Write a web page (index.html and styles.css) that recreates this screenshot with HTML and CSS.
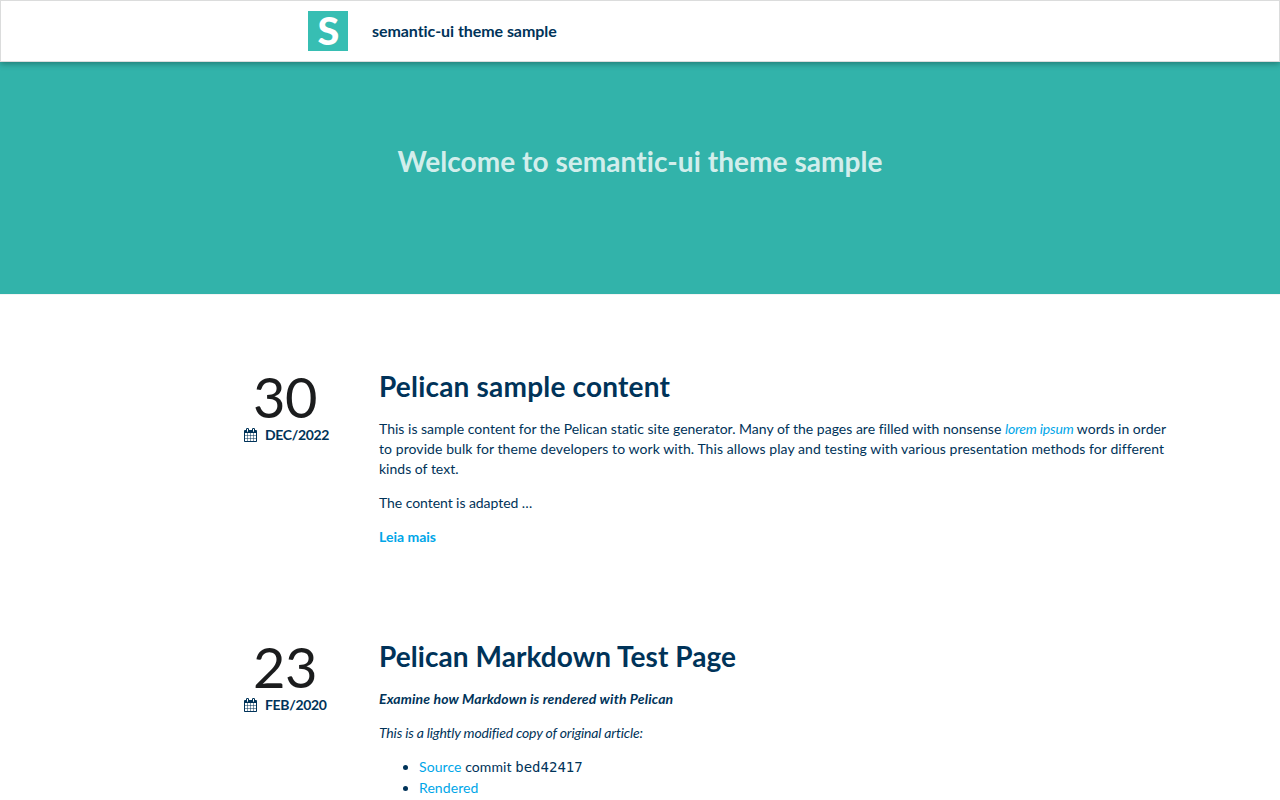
FILE: index.html
```html
<!DOCTYPE html>
<html lang="pt">
<head>
<meta charset="utf-8">
<title>semantic-ui theme sample</title>
<link rel="stylesheet" href="styles.css">
</head>
<body>
<svg class="symbols" aria-hidden="true">
  <symbol id="calendar" viewBox="0 0 1664 1792">
    <path d="M128 1664h288v-288h-288v288zm352 0h320v-288h-320v288zm-352-352h288v-320h-288v320zm352 0h320v-320h-320v320zm-352-384h288v-288h-288v288zm736 736h320v-288h-320v288zm-384-736h320v-288h-320v288zm768 736h288v-288h-288v288zm-384-352h320v-320h-320v320zm-352-864v-288q0-13-9.5-22.5t-22.5-9.5h-64q-13 0-22.5 9.5t-9.5 22.5v288q0 13 9.5 22.5t22.5 9.5h64q13 0 22.5-9.5t9.5-22.5zm736 864h288v-320h-288v320zm-384-384h320v-288h-320v288zm384 0h288v-288h-288v288zm32-480v-288q0-13-9.500-22.500t-22.500-9.500h-64q-13 0-22.500 9.500t-9.500 22.500v288q0 13 9.500 22.500t22.500 9.500h64q13 0 22.500-9.500t9.500-22.500zm384-64v1280q0 52-38 90t-90 38h-1408q-52 0-90-38t-38-90v-1280q0-52 38-90t90-38h128v-96q0-66 47-113t113-47h64q66 0 113 47t47 113v96h384v-96q0-66 47-113t113-47h64q66 0 113 47t47 113v96h128q52 0 90 38t38 90z"/>
  </symbol>
</svg>
<header class="menu">
  <a class="brand" href="#">
    <svg class="logo" viewBox="0 0 40 40"><rect width="40" height="40" fill="#37beb3"/><text class="logo-letter" transform="translate(20.3 33.5) scale(1.07 1)">S</text></svg>
    <span>semantic-ui theme sample</span>
  </a>
</header>
<section class="hero">
  <h1 class="hero-title">Welcome to semantic-ui theme sample</h1>
</section>
<main class="posts">
  <article class="post">
    <aside class="date">
      <div class="day">30</div>
      <div class="month"><svg class="icon"><use href="#calendar"/></svg>DEC/2022</div>
    </aside>
    <div class="content">
      <h1 class="title">Pelican sample content</h1>
      <p class="intro">This is sample content for the Pelican static site generator. Many of the pages are filled with nonsense <a href="#"><em class="term">lorem ipsum</em></a> words in order <span class="loose">to provide bulk for theme developers to work with. This allows play and testing with various presentation methods for different</span> kinds of text.</p>
      <p class="tight">The content is adapted …</p>
      <p><a class="more" href="#">Leia mais</a></p>
    </div>
  </article>
  <article class="post">
    <aside class="date">
      <div class="day">23</div>
      <div class="month">
        <svg class="icon"><use href="#calendar"/></svg>FEB/2020</div>
    </aside>
    <div class="content">
      <h1 class="title title-long">Pelican Markdown Test Page</h1>
      <p class="summary"><strong><em>Examine how Markdown is rendered with Pelican</em></strong></p>
      <p class="note"><em>This is a lightly modified copy of original article:</em></p>
      <ul>
        <li><a href="#">Source</a> commit <code>bed42417</code></li>
        <li><a href="#">Rendered</a></li>
      </ul>
    </div>
  </article>
</main>
</body>
</html>
```
FILE: styles.css
```css
* { box-sizing: border-box; }
html { height: 100%; overflow: hidden; }
body {
  margin: 0;
  height: 100%;
  overflow: hidden;
  background: #fff;
  color: #003359;
  font: 14px/20px Lato, "Liberation Sans", sans-serif;
  font-variant-ligatures: none;
}
.symbols { display: none; }
a { color: #00a6e8; text-decoration: none; }
.menu {
  position: relative;
  display: flex;
  align-items: center;
  height: 62px;
  padding-left: 307px;
  background: #fff;
  border: 1px solid #dbdcdc;
  box-shadow: 0 2px 6px rgba(0, 0, 0, 0.3);
}
.brand {
  display: flex;
  align-items: center;
  gap: 24px;
  color: #003359;
  font-size: 16px;
  font-weight: 700;
  letter-spacing: -0.06px;
}
.logo { width: 40px; height: 40px; }
.logo-letter {
  fill: #fff;
  font: 900 37px Lato, sans-serif;
  text-anchor: middle;
}
.hero {
  height: 232px;
  padding-top: 81px;
  background: #32b3aa;
  text-align: center;
}
.hero-title {
  margin: 0;
  color: rgba(255, 255, 255, 0.8);
  font-size: 28px;
  line-height: 36px;
  letter-spacing: 0.06px;
}
.posts { padding-top: 74px; border-top: 1px solid #f3f4f4; }
.post {
  display: flex;
  gap: 50px;
  height: 270px;
  padding-left: 244px;
}
.post:last-child { height: auto; }
.date { width: 85px; flex: none; }
.day {
  height: 56px;
  padding-right: 3px;
  color: #1b1c1d;
  font-size: 56px;
  line-height: 56px;
  text-align: center;
  letter-spacing: -0.6px;
}
.month {
  display: flex;
  align-items: center;
  gap: 8px;
  font-weight: 700;
  letter-spacing: -0.33px;
  white-space: nowrap;
}
.icon { width: 13px; height: 14px; flex: none; fill: currentColor; }
.content { width: 797px; }
.title { margin: -1px 0 15px; font-size: 28px; line-height: 36px; letter-spacing: 0.2px; }
.title-long { letter-spacing: 0.06px; }
p { margin: 0 0 14px; }
.intro { letter-spacing: 0.01px; }
.term { letter-spacing: -0.18px; }
.loose { letter-spacing: 0.075px; }
.tight { letter-spacing: -0.06px; }
.summary { letter-spacing: 0.14px; }
.note { letter-spacing: -0.18px; }
.more { font-weight: 700; }
ul { margin: -1px 0 0; padding-left: 40px; }
li { line-height: 21px; letter-spacing: 0.08px; }
code { font: 14px/1 "DejaVu Sans Mono", monospace; letter-spacing: 0; }
```
